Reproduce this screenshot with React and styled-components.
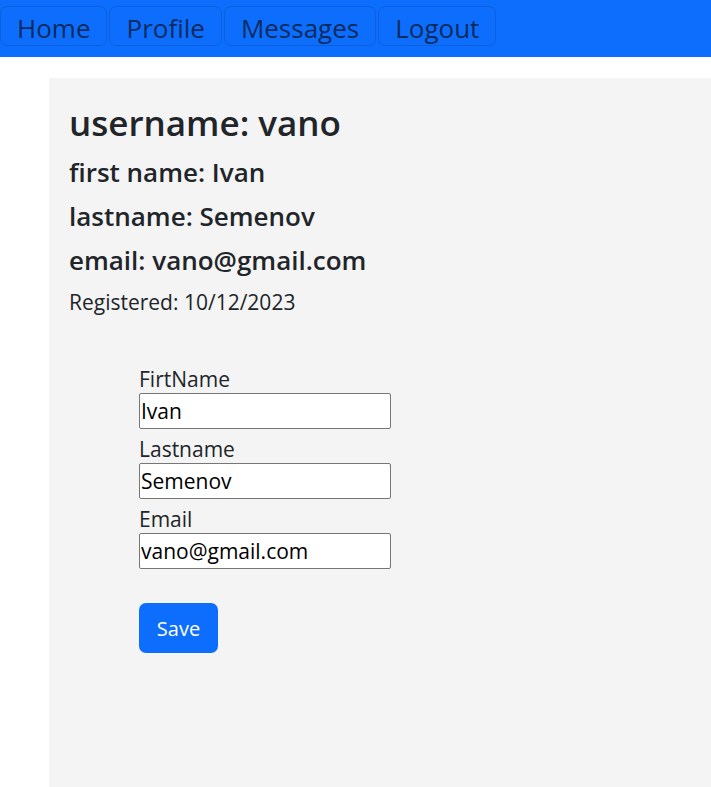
import React from "react";
import styled, { createGlobalStyle } from "styled-components";

const GlobalStyle = createGlobalStyle`
  body {
    margin: 0;
    background: #fff;
    font-family: "Open Sans", "Noto Sans", sans-serif;
    color: #212529;
  }
`;

const NavBar = styled.nav`
  height: 57px;
  background-color: #0d6efd;

  display: flex;
  flex-direction: row;
  align-items: flex-start;
  gap: 2px;
  padding-top: 6px;
  box-sizing: border-box;
`;

const NavButton = styled.button`
  height: 40px;
  padding: 4px 16px 0px 16px;
  border: 1px solid rgba(0, 0, 0, 0.12);
  border-radius: 7px;
  background: none;
  color: #0b2b5e;
  font-family: "Open Sans", sans-serif;
  font-size: 26px;
  line-height: 1;
  cursor: pointer;
`;

const Panel = styled.main`
  margin: 21px 0px 0px 49px;
  min-height: 709px;
  padding: 20px;
  box-sizing: border-box;
  background-color: #f4f4f4;
`;

const Title = styled.h2`
  font-size: 35px;
  font-weight: 600;
  line-height: 1;
  margin: 7px 0px 18px 0px;
`;

const Info = styled.h4`
  font-size: 26px;
  font-weight: 600;
  line-height: 28px;
  margin: 0px 0px 16px 0px;
`;

const Registered = styled.p`
  font-size: 21px;
  line-height: 24px;
  margin: 2px 0px 0px 0px;
`;

const Form = styled.form`
  width: 252px;
  margin: 45px 0px 0px 70px;

  display: flex;
  flex-direction: column;
`;

const Label = styled.label`
  font-size: 21px;
  line-height: 24px;
  height: 34px;
  display: flex;
  align-items: flex-end;
  padding-bottom: 2px;
  box-sizing: border-box;
`;

const Input = styled.input`
  height: 36px;
  width: 100%;
  box-sizing: border-box;
  margin: 0px;
  padding: 0px 1px;
  border: 1px solid #767676;
  border-radius: 2px;
  background: #fff;
  color: #000;
  font-family: "Open Sans", sans-serif;
  font-size: 21px;
`;

const SaveButton = styled.button`
  align-self: flex-start;
  width: 79px;
  height: 50px;
  margin-top: 34px;
  border: none;
  border-radius: 7px;
  background-color: #0d6efd;
  color: #fff;
  font-family: "Open Sans", sans-serif;
  font-size: 20px;
  cursor: pointer;
`;

const fields = [
  { label: "FirtName", value: "Ivan" },
  { label: "Lastname", value: "Semenov" },
  { label: "Email", value: "vano@gmail.com" },
];

const App = () => {
  return (
    <>
      <GlobalStyle />
      <NavBar>
        <NavButton>Home</NavButton>
        <NavButton>Profile</NavButton>
        <NavButton>Messages</NavButton>
        <NavButton>Logout</NavButton>
      </NavBar>

      <Panel>
        <Title>username: vano</Title>
        <Info>first name: Ivan</Info>
        <Info>lastname: Semenov</Info>
        <Info>email: vano@gmail.com</Info>
        <Registered>Registered: 10/12/2023</Registered>

        <Form onSubmit={(e) => e.preventDefault()}>
          {fields.map((f) => (
            <React.Fragment key={f.label}>
              <Label>{f.label}</Label>
              <Input defaultValue={f.value} />
            </React.Fragment>
          ))}
          <SaveButton type="submit">Save</SaveButton>
        </Form>
      </Panel>
    </>
  );
};

export default App;
